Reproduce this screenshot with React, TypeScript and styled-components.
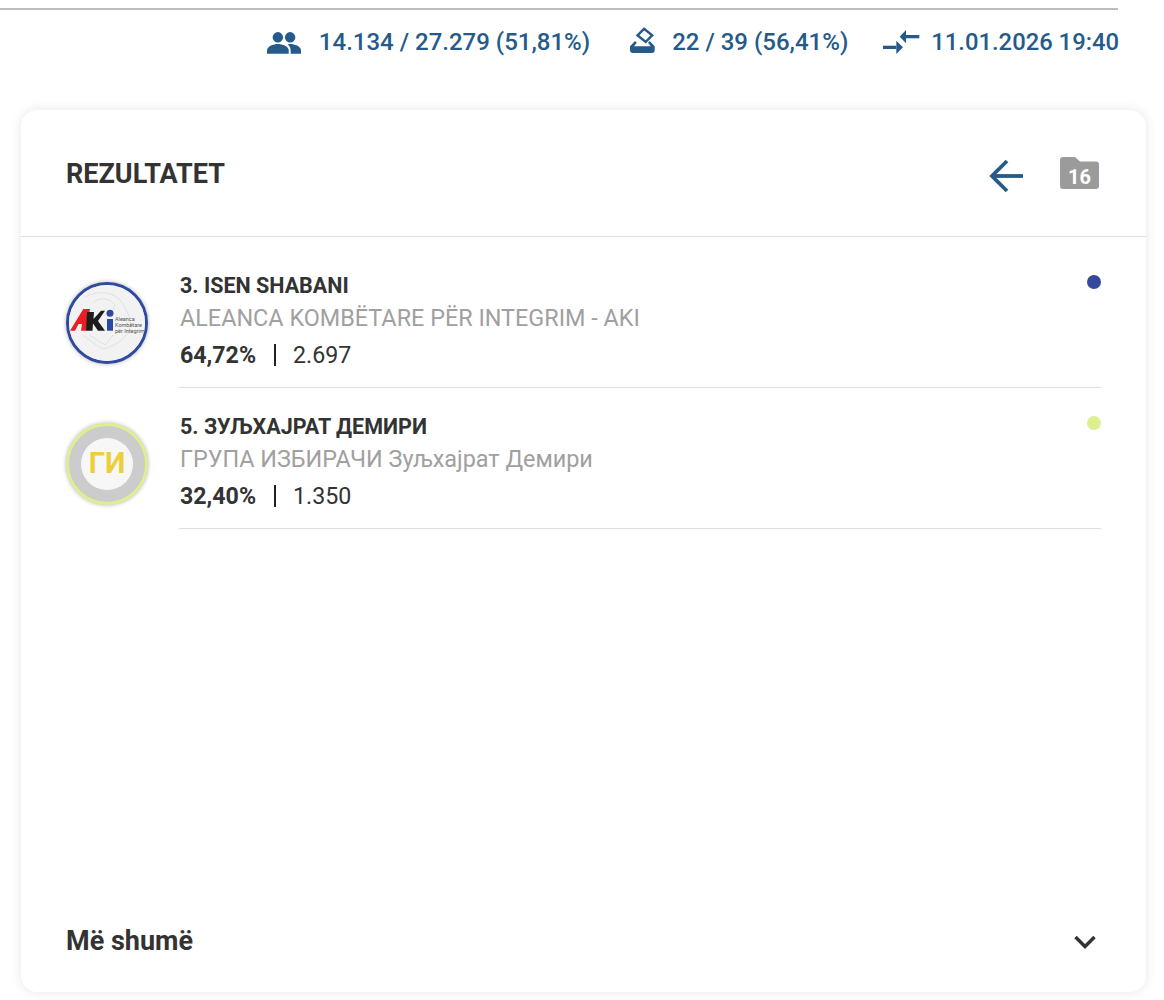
import React from "react";
import styled, { createGlobalStyle } from "styled-components";

const GlobalStyle = createGlobalStyle`
  html, body {
    margin: 0;
    padding: 0;
    background: #ffffff;
    font-family: Roboto, "Liberation Sans", sans-serif;
  }
`;

const Page = styled.div`
  width: 1164px;
  height: 1000px;
  overflow: hidden;
  padding-top: 8px;
  box-sizing: border-box;
`;

const TopRule = styled.div`
  width: 1118px;
  height: 2px;
  background: #bdbdbd;
`;

const StatsBar = styled.div`
  width: 1119px;
  height: 64px;
  display: flex;
  justify-content: flex-end;
  align-items: center;
  gap: 35px;
  color: #255a8a;
`;

const Stat = styled.div<{ $gap: number; $lead?: number; $size?: number }>`
  display: flex;
  align-items: center;
  gap: ${(p) => p.$gap}px;
  margin-left: ${(p) => p.$lead ?? 0}px;
  font-size: ${(p) => p.$size ?? 24}px;
  font-weight: 500;
  white-space: nowrap;
`;

const Card = styled.section`
  margin: 36px 0 0 21px;
  width: 1125px;
  height: 882px;
  box-sizing: border-box;
  background: #fff;
  border-radius: 16px;
  box-shadow: 0 0 12px rgba(0, 0, 0, 0.1);
  display: flex;
  flex-direction: column;
`;

const CardHeader = styled.header`
  height: 127px;
  box-sizing: border-box;
  padding: 0 47px 0 45px;
  border-bottom: 1px solid #dedede;
  display: flex;
  align-items: center;
  justify-content: space-between;
`;

const CardTitle = styled.h2`
  margin: 1px 0 0;
  font-size: 27px;
  font-weight: 700;
  color: #333;
`;

const HeaderActions = styled.div`
  display: flex;
  align-items: flex-start;
  gap: 37px;
  margin-top: 4px;
`;

const BackButton = styled.div`
  height: 34px;
  margin-top: 2px;
`;

const FolderBox = styled.div`
  position: relative;
  width: 39px;
  height: 32px;
`;

const FolderCount = styled.span`
  position: absolute;
  left: 0;
  right: 0;
  top: 9px;
  text-align: center;
  font-size: 20px;
  line-height: 22px;
  font-weight: 700;
  color: #fff;
`;

const List = styled.div`
  flex: 1;
  padding: 10px 45px 0 45px;
`;

const Row = styled.div`
  height: 141px;
  display: flex;
  gap: 31px;
`;

const Avatar = styled.div<{ $ring: string; $bg: string }>`
  flex: none;
  width: 82px;
  height: 82px;
  margin-top: 35px;
  box-sizing: border-box;
  border-radius: 50%;
  border: 3px solid ${(p) => p.$ring};
  background: ${(p) => p.$bg};
  box-shadow: 0 0 4px rgba(0, 0, 0, 0.3);
  display: flex;
  align-items: center;
  justify-content: center;
  overflow: hidden;
`;

const InitialsDisc = styled.div`
  width: 52px;
  height: 52px;
  box-sizing: border-box;
  padding-bottom: 2px;
  border-radius: 50%;
  background: #f7f7f7;
  color: #eccf3a;
  font-size: 29px;
  font-weight: 700;
  display: flex;
  align-items: center;
  justify-content: center;
`;

const RowBody = styled.div`
  flex: 1;
  position: relative;
  border-bottom: 1px solid #dedede;
  padding: 25px 0 0 1px;
  box-sizing: border-box;
`;

const Candidate = styled.div`
  font-size: 21.5px;
  line-height: 28px;
  font-weight: 700;
  color: #333;
`;

const Party = styled.div`
  font-size: 23.4px;
  line-height: 30px;
  margin-top: 3px;
  color: #a0a0a0;
`;

const Figures = styled.div`
  display: flex;
  align-items: center;
  margin-top: 7px;
  font-size: 23.2px;
  line-height: 30px;
  color: #333;
`;

const Percent = styled.span`
  font-weight: 700;
`;

const Divider = styled.span`
  width: 2px;
  height: 22px;
  margin: 0 17px 0 18px;
  background: #222;
`;

const Dot = styled.span<{ $color: string }>`
  position: absolute;
  right: 0;
  top: 28px;
  width: 14px;
  height: 14px;
  border-radius: 50%;
  background: ${(p) => p.$color};
`;

const CardFooter = styled.footer`
  height: 101px;
  box-sizing: border-box;
  padding: 0 49px 0 45px;
  display: flex;
  align-items: center;
  justify-content: space-between;
`;

const MoreLabel = styled.span`
  margin-bottom: 2px;
  font-size: 27px;
  font-weight: 700;
  color: #333;
`;

const LogoCaption = styled.text`
  font-size: 5.5px;
  fill: #555;
`;

const BallotSvg = styled.svg`
  margin-bottom: 5px;
`;

const SyncSvg = styled.svg`
  margin-bottom: 1px;
`;

const PeopleIcon = () => (
  <svg width="34" height="23" viewBox="0 0 36 24" fill="#255a8a">
    <circle cx="11.5" cy="6.5" r="5.5" />
    <circle cx="24.5" cy="6.5" r="5.5" />
    <path d="M0 24v-3.500C0 15.800 7 13.600 11.500 13.600S23 15.800 23 20.500V24z" />
    <path d="M25 24v-3.500c0-2.700-1-4.900-3-6.500.9-.2 1.800-.4 2.500-.4 4.500 0 11.500 2.200 11.500 6.900V24z" />
  </svg>
);

const BallotIcon = () => (
  <BallotSvg width="25" height="26" viewBox="0 0 25 26">
    <path d="M14 1.800 L22.200 8.300 L15.700 14.900 L7.500 8.300z" fill="none" stroke="#255a8a" strokeWidth="2.400" />
    <path d="M0 19.300 L5 14 L6.800 15.700 L4 19.300 H20.700 L18 15.700 L19.700 14 L24.700 19.300 V23 a3 3 0 0 1-3 3 H3 a3 3 0 0 1-3-3z" fill="#255a8a" />
  </BallotSvg>
);

const SyncIcon = () => (
  <SyncSvg width="37" height="24" viewBox="0 0 37 24" fill="#255a8a">
    <path d="M23 5H36.300V8.300H23z" />
    <path d="M23 0V13.300L16.700 6.700z" />
    <path d="M0 15.700H13.300V19H0z" />
    <path d="M13.300 10.700V24L20 17.300z" />
  </SyncSvg>
);

const BackIcon = () => (
  <svg width="34" height="34" viewBox="0 0 34 34" fill="none" stroke="#255a8a" strokeWidth="3.800">
    <path d="M34 17H3" />
    <path d="M18 2 L3 17 L18 32" />
  </svg>
);

const FolderIcon = () => (
  <svg width="39" height="32" viewBox="0 0 39 32" fill="#9b9b9b">
    <path d="M0 3a3 3 0 0 1 3-3h12l5 4.500H36a3 3 0 0 1 3 3V29a3 3 0 0 1-3 3H3a3 3 0 0 1-3-3z" />
  </svg>
);

const ChevronIcon = () => (
  <svg width="24" height="16" viewBox="0 0 24 16" fill="none" stroke="#333" strokeWidth="3.400">
    <path d="M2.500 3 L12 12.500 L21.500 3" />
  </svg>
);

const AkiLogo = () => (
  <svg width="76" height="76" viewBox="0 0 76 76">
    <rect width="76" height="76" fill="#f2f2f2" />
    <g fill="none" stroke="#dcdcdc" strokeWidth="0.800">
      <path d="M16 12 C26 6 42 6 50 14 C58 24 64 36 60 46 C54 56 44 62 34 64 C26 60 20 54 14 50" />
      <path d="M24 18 C30 12 40 12 46 20 L42 30" />
      <path d="M20 50 L36 60 L44 50" />
    </g>
    <path d="M1 45.700 L14.300 24 H21 L17 45.700 H12 L13 39 H9.500 L6 45.700z" fill="#ec1c24" />
    <path d="M18 27 H25 L24.500 34 L32 25.700 H36 L29 36 L36 45.700 H29 L24 38.500 L23.500 45.700 H17z" fill="#1d1d1b" />
    <rect x="38" y="34" width="6" height="11.700" fill="#2b4aa0" />
    <circle cx="41" cy="28.300" r="3.500" fill="#2b4aa0" />
    <LogoCaption x="46" y="36">Aleanca</LogoCaption>
    <LogoCaption x="46" y="42">Kombëtare</LogoCaption>
    <LogoCaption x="46" y="48">për Integrim</LogoCaption>
  </svg>
);

export default function App(): JSX.Element {
  return (
    <Page>
      <GlobalStyle />
      <TopRule />
      <StatsBar>
        <Stat $gap={18}>
          <PeopleIcon />
          14.134 / 27.279 (51,81%)
        </Stat>
        <Stat $gap={17} $lead={5}>
          <BallotIcon />
          22 / 39 (56,41%)
        </Stat>
        <Stat $gap={11} $size={23.8}>
          <SyncIcon />
          11.01.2026 19:40
        </Stat>
      </StatsBar>
      <Card>
        <CardHeader>
          <CardTitle>REZULTATET</CardTitle>
          <HeaderActions>
            <BackButton>
              <BackIcon />
            </BackButton>
            <FolderBox>
              <FolderIcon />
              <FolderCount>16</FolderCount>
            </FolderBox>
          </HeaderActions>
        </CardHeader>
        <List>
          <Row>
            <Avatar $ring="#2f4a9f" $bg="#f2f2f2">
              <AkiLogo />
            </Avatar>
            <RowBody>
              <Candidate>3. ISEN SHABANI</Candidate>
              <Party>ALEANCA KOMBËTARE PËR INTEGRIM - AKI</Party>
              <Figures>
                <Percent>64,72%</Percent>
                <Divider />
                2.697
              </Figures>
              <Dot $color="#34499c" />
            </RowBody>
          </Row>
          <Row>
            <Avatar $ring="#dcf08f" $bg="#cccccc">
              <InitialsDisc>ГИ</InitialsDisc>
            </Avatar>
            <RowBody>
              <Candidate>5. ЗУЉХАЈРАТ ДЕМИРИ</Candidate>
              <Party>ГРУПА ИЗБИРАЧИ Зуљхајрат Демири</Party>
              <Figures>
                <Percent>32,40%</Percent>
                <Divider />
                1.350
              </Figures>
              <Dot $color="#dcf08f" />
            </RowBody>
          </Row>
        </List>
        <CardFooter>
          <MoreLabel>Më shumë</MoreLabel>
          <ChevronIcon />
        </CardFooter>
      </Card>
    </Page>
  );
}
